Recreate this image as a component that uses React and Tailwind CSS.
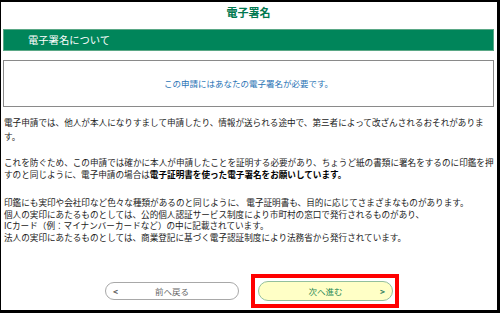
export default function App() {
  return (
    <div
      className="w-[500px] h-[313px] bg-white border-black border-t-2 border-l border-r-[3px] border-b-[3px] pl-[2px] pr-[3px] overflow-hidden"
      style={{ fontFamily: '"Noto Sans CJK JP", "Noto Sans", sans-serif' }}
    >
      {/* 見出し */}
      <div className="h-[20px] leading-[20px] text-center text-[11px] font-bold text-[#00784f]">
        電子署名
      </div>

      {/* 緑のバー */}
      <div className="mt-[7px] h-[22px] bg-[#00855a] border border-[#5aa886] flex items-center pl-[24px]">
        <span className="text-[10.3px] text-white">電子署名について</span>
      </div>

      {/* お知らせボックス */}
      <div className="mt-[9px] h-[47px] border border-[#8a8a8a] flex items-center justify-center">
        <span className="text-[8.5px] text-[#2a74b5]">この申請にはあなたの電子署名が必要です。</span>
      </div>

      {/* 本文 */}
      <div className="pl-px text-[8.6px] text-[#222] whitespace-nowrap">
        <p className="mt-[8px] leading-[14px]">
          電子申請では、他人が本人になりすまして申請したり、情報が送られる途中で、第三者によって改ざんされるおそれがありま
          <br />
          す。
        </p>
        <p className="mt-[14px] leading-[11.5px]">
          これを防ぐため、この申請では確かに本人が申請したことを証明する必要があり、ちょうど紙の書類に署名をするのに印鑑を押
          <br />
          すのと同じように、電子申請の場合は
          <b className="text-black">電子証明書を使った電子署名をお願いしています。</b>
        </p>
        <p className="mt-[17px] leading-[11.5px]">
          印鑑にも実印や会社印など色々な種類があるのと同じように、 電子証明書も、目的に応じてさまざまなものがあります。
          <br />
          個人の実印にあたるものとしては、公的個人認証サービス制度により市町村の窓口で発行されるものがあり、
          <br />
          ICカード（例：マイナンバーカードなど）の中に記載されています。
          <br />
          法人の実印にあたるものとしては、商業登記に基づく電子認証制度により法務省から発行されています。
        </p>
      </div>

      {/* ボタン */}
      <div className="mt-[31px] flex items-center justify-center gap-[12px] pl-[7px]">
        <button className="w-[134px] h-[18px] rounded-full border border-[#a8a8a8] bg-white flex items-center px-[7px] text-[8.5px]">
          <span className="text-[#555] font-bold w-[10px] text-left">&lt;</span>
          <span className="flex-1 text-center text-[#666] pr-[10px]">前へ戻る</span>
        </button>
        <div className="h-[34px] border-4 border-[#ff0000] pl-[3px] pr-[2px] flex items-center">
          <button className="w-[135px] h-[20px] rounded-full border border-[#94c09c] bg-[#ffffc6] flex items-center px-[7px] text-[8.5px]">
            <span className="w-[10px]" />
            <span className="flex-1 text-center text-[#2b8a56]">次へ進む</span>
            <span className="text-[#2b7d5a] font-bold w-[10px] text-right">&gt;</span>
          </button>
        </div>
      </div>
    </div>
  );
}
